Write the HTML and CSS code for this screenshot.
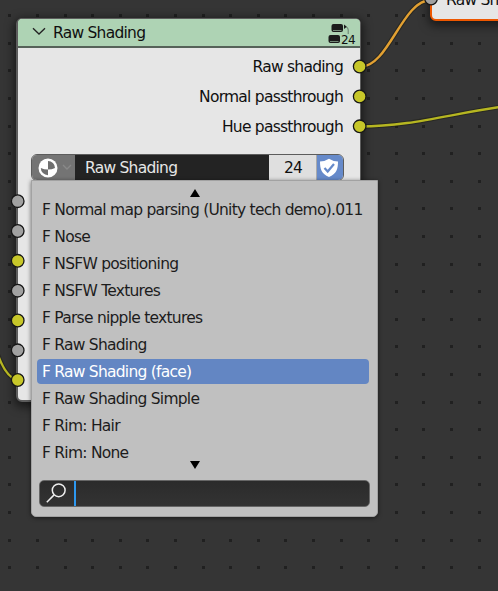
FILE: index.html
```
<!DOCTYPE html>
<html lang="en">
<head>
<meta charset="utf-8">
<title>Shader Editor</title>
<link rel="stylesheet" href="styles.css">
</head>
<body>
<main class="editor">
  <svg class="grid" id="grid" width="498" height="591" aria-hidden="true"></svg>

  <section class="node node-next">
    <span class="next-title">Raw Sh</span>
  </section>

  <section class="node node-group">
    <header class="node-header">
      <svg class="chevron" width="14" height="9" viewBox="0 0 14 9"><path d="M1 1.2 7 7l6-5.800"/></svg>
      <span class="node-title">Raw Shading</span>
      <span class="users">
        <svg class="users-icon" width="22" height="22" viewBox="0 0 22 22">
          <rect x="3.500" y="1" width="11.500" height="8" rx="2"/><rect x="0.500" y="12" width="11.500" height="8" rx="2"/>
          <path class="bar" d="M5 7.500h8.500M2 18.500h8.500"/><path d="M16 1.500v4.500l2.800-2.300z"/><path class="hook" d="M18 4q2.200 0 2.200 3v4"/>
        </svg>
        <span class="users-count">24</span>
      </span>
    </header>
    <div class="outputs">
      <div class="output">Raw shading</div>
      <div class="output">Normal passthrough</div>
      <div class="output">Hue passthrough</div>
    </div>
    <div class="datablock">
      <div class="browse">
        <svg width="20" height="20" viewBox="0 0 20 20"><circle cx="10" cy="10" r="9.500" fill="#fff"/><path d="M10 3A7 7 0 0 1 17 10q-3 1.500-7 1.500zM10 17.200A7.200 7.200 0 0 1 2.800 10Q6 11.500 10 11.500z" fill="#6f6f6f"/></svg>
        <svg class="browse-arrow" width="10" height="7" viewBox="0 0 10 7"><path d="m1 1 4 4 4-4"/></svg>
      </div>
      <div class="block-name">Raw Shading</div>
      <div class="block-users">24</div>
      <div class="fake-user">
        <svg width="20" height="20" viewBox="0 0 20 20"><path d="M10 .8Q6 3.500 1 3.500C1 11 2.500 16 10 19c7.500-3 9-8 9-15.500q-5 0-9-2.700z" fill="#fff"/><path d="m5.500 10 3.200 3.500 6.300-7.500" fill="none" stroke="#668aca" stroke-width="2.200"/></svg>
      </div>
    </div>
  </section>

  <svg class="wires" width="498" height="591" viewBox="0 0 498 591">
    <g class="wire-shade"><path d="M360 67C389 67 402 0 431 0"/><path d="M360 126.500C410 126.500 450 114 500 107"/><path d="M-2 355Q6 377 17 380"/></g>
    <path class="wire-orange" d="M360 67C389 67 402 0 431 0"/>
    <path class="wire-yellow" d="M360 126.500C410 126.500 450 114 500 107"/>
    <path class="wire-yellow" d="M-2 355Q6 377 17 380"/>
    <g class="socket color"><circle cx="359.700" cy="66.500" r="6.300"/><circle cx="359.700" cy="96.500" r="6.300"/><circle cx="359.700" cy="126.300" r="6.300"/><circle cx="17.700" cy="260.800" r="6.300"/><circle cx="17.700" cy="320.500" r="6.300"/><circle cx="17.700" cy="380" r="6.300"/></g>
    <g class="socket value"><circle cx="431" cy="-1.500" r="6.300"/><circle cx="17.700" cy="201.200" r="6.300"/><circle cx="17.700" cy="231" r="6.300"/><circle cx="17.700" cy="290.700" r="6.300"/><circle cx="17.700" cy="350.300" r="6.300"/></g>
  </svg>

  <div class="popup">
    <svg class="more" width="10" height="8" viewBox="0 0 10 8"><path d="M0 8 5 0l5 8z"/></svg>
    <ul class="list">
      <li>F Normal map parsing (Unity tech demo).011</li>
      <li>F Nose</li>
      <li>F NSFW positioning</li>
      <li>F NSFW Textures</li>
      <li>F Parse nipple textures</li>
      <li>F Raw Shading</li>
      <li class="active">F Raw Shading (face)</li>
      <li>F Raw Shading Simple</li>
      <li>F Rim: Hair</li>
      <li>F Rim: None</li>
    </ul>
    <svg class="more" width="10" height="8" viewBox="0 0 10 8"><path d="M0 0h10L5 8z"/></svg>
    <div class="search">
      <svg width="20" height="20" viewBox="0 0 20 20"><circle cx="12.700" cy="7.300" r="6.400"/><path d="M8.100 11.900.8 19.200"/></svg>
      <span class="caret"></span>
    </div>
  </div>
</main>
<script src="grid.js"></script>
</body>
</html>
```
FILE: styles.css
```
* { box-sizing: border-box; }
body { margin: 0; background: #353535; }
.editor {
  position: relative;
  width: 498px;
  height: 591px;
  overflow: hidden;
  background: #353535;
  font: 15.5px/27px "DejaVu Sans", sans-serif;
  letter-spacing: -0.75px;
  color: #101010;
  white-space: nowrap;
}
.grid, .wires { position: absolute; left: 0; top: 0; }
.grid { fill: #202020; }
.node { position: absolute; background: #e6e6e6; }
.node-group {
  left: 16px;
  top: 18px;
  width: 345px;
  height: 384px;
  border: 2px solid #5c5c5c;
  border-top-width: 1px;
  border-right-width: 1px;
  border-radius: 6px;
  box-shadow: 0 3px 10px 2px rgba(0, 0, 0, .55);
}
.node-next {
  left: 430px;
  top: -40px;
  width: 120px;
  height: 61px;
  padding: 25px 0 0 14px;
  border: 2px solid #ed5700;
  border-radius: 6px;
  box-shadow: 0 3px 10px 2px rgba(0, 0, 0, .5);
}
.next-title { display: block; }
.node-header {
  display: flex;
  align-items: center;
  height: 29px;
  padding: 0 4px 0 14px;
  background: #aed3b4;
  border-bottom: 2px solid #566259;
  border-radius: 4px 4px 0 0;
}
.chevron { margin-top: -2px; fill: none; stroke: #222; stroke-width: 1.3; }
.node-title { margin: 2px 0 0 7px; }
.users { display: flex; align-items: flex-end; width: 28px; height: 24px; margin-left: auto; }
.users-icon { flex: none; fill: #1b1b1b; margin: 0 -9px 0 0; }
.users .bar { stroke: #728876; stroke-width: 1; }
.users .hook { stroke: #53645a; stroke-width: .8; fill: none; }
.users-count { font: 12px/12px "DejaVu Sans", sans-serif; letter-spacing: -.7px; margin-bottom: -1px; }
.outputs { padding: 5px 17px 0 0; text-align: right; }
.output { height: 30px; line-height: 28px; }
.datablock { display: flex; width: 313px; height: 27px; margin: 11px 0 0 13px; border: 1px solid #5c5c5c; border-radius: 6px; overflow: hidden; }
.browse { display: flex; align-items: center; width: 43px; padding-left: 6px; background: #747474; }
.browse-arrow { margin-left: 4px; fill: none; stroke: #898989; stroke-width: 1.4; }
.block-name { width: 194px; padding-left: 10px; line-height: 26px; background: #232323; color: #e6e6e6; }
.block-users { width: 47px; line-height: 26px; padding-left: 1px; text-align: center; background: #dfdfdf; }
.fake-user { display: flex; flex: 1; align-items: center; padding-left: 2px; background: #668aca; border-left: 1px solid #aaa; }
.wires path { fill: none; }
.wire-shade { stroke: #202018; stroke-width: 4.6; opacity: .6; }
.wire-orange { stroke: #e2a032; stroke-width: 2.4; }
.wire-yellow { stroke: #b6b621; stroke-width: 2.4; }
.socket { stroke: #161616; stroke-width: 1.3; }
.color { fill: #c7c729; }
.value { fill: #a1a1a1; }
.popup {
  position: absolute;
  left: 31px;
  top: 180px;
  width: 347px;
  height: 337px;
  padding: 8px 7px 0;
  background: #c0c0c0;
  border: 1px solid #a2a2a2;
  border-radius: 0 0 5px 5px;
  box-shadow: 0 1px 4px rgba(0, 0, 0, .55);
}
.more { display: block; margin-left: 151px; }
.list { margin: 0 0 -6px -2px; padding: 0; list-style: none; }
.list li { width: 332px; height: 25px; margin-bottom: 2px; padding-left: 5px; line-height: 27px; border-radius: 4px; color: #1c1c1c; }
.list .active { background: #6386c3; color: #fff; }
.search {
  display: flex;
  align-items: center;
  width: 331px;
  height: 27px;
  margin-top: 11px;
  padding-left: 6px;
  background: linear-gradient(#2b2b2b, #333);
  border: 1px solid #666;
  border-radius: 5px;
}
.search svg { margin-top: -2px; fill: none; stroke: #eee; stroke-width: 1.5; }
.caret { width: 2px; height: 25px; margin-left: 8px; background: #2d98f0; }
```
FILE: grid.js
```
const grid = document.getElementById('grid');
const step = 27.6;
for (let row = 0; row < 21; row++) {
  for (let col = 0; col < 18; col++) {
    const dot = document.createElementNS('http://www.w3.org/2000/svg', 'rect');
    dot.setAttribute('x', Math.round(8.3 + col * step));
    dot.setAttribute('y', Math.round(14.2 + row * step));
    dot.setAttribute('width', 3);
    dot.setAttribute('height', 3);
    grid.appendChild(dot);
  }
}
```
